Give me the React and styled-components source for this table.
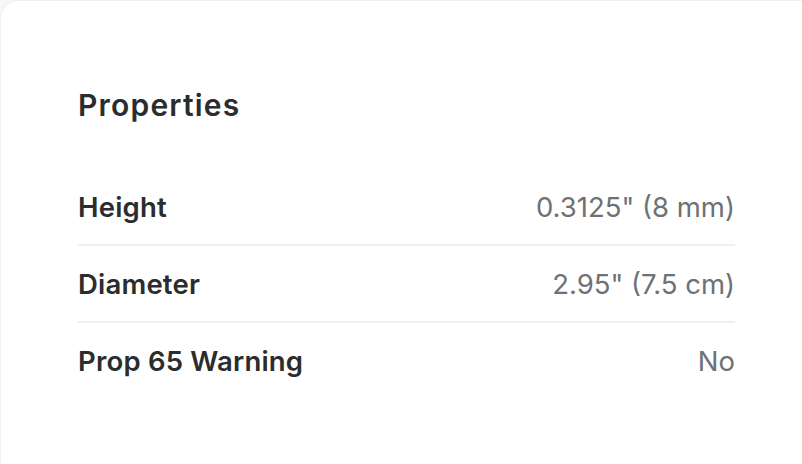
import styled, { createGlobalStyle } from 'styled-components';

const GlobalStyle = createGlobalStyle`
  html, body {
    margin: 0;
    padding: 0;
    background: #ffffff;
  }
  body {
    font-family: Inter, "Noto Sans", sans-serif;
    -webkit-font-smoothing: antialiased;
  }
`;

const Page = styled.div`
  width: 802px;
  height: 464px;
  overflow: hidden;
  background: #f6f6f6;
`;

const Card = styled.section`
  margin: 1px 0 0 1px;
  width: 830px;
  height: 500px;
  box-sizing: border-box;
  background: #ffffff;
  border-radius: 18px;
  box-shadow: 0 0 0 1px #f0f0f0;
  padding: 86px 0 0 77px;
`;

const Title = styled.h2`
  margin: 0;
  font-size: 30px;
  line-height: 36px;
  font-weight: 600;
  color: #2b2c2e;
  letter-spacing: 1.2px;
`;

const List = styled.dl`
  margin: 46px 0 0;
  width: 657px;
`;

const Row = styled.div`
  display: flex;
  align-items: center;
  justify-content: space-between;
  height: 75px;
  border-bottom: ${(p) => (p.$last ? 'none' : '2px solid #f0f0f0')};
`;

const Label = styled.dt`
  font-size: 27.5px;
  font-weight: 600;
  color: #2b2c2e;
  letter-spacing: 0.2px;
`;

const Value = styled.dd`
  margin: 0;
  font-size: 27.5px;
  font-weight: 400;
  color: #6e7175;
  letter-spacing: 0px;
`;

const properties = [
  { label: 'Height', value: '0.3125" (8 mm)' },
  { label: 'Diameter', value: '2.95" (7.5 cm)' },
  { label: 'Prop 65 Warning', value: 'No' },
];

const App = () => {
  return (
    <Page>
      <GlobalStyle />
      <Card>
        <Title>Properties</Title>
        <List>
          {properties.map((item, i) => (
            <Row key={item.label} $last={i === properties.length - 1}>
              <Label>{item.label}</Label>
              <Value>{item.value}</Value>
            </Row>
          ))}
        </List>
      </Card>
    </Page>
  );
};

export default App;
